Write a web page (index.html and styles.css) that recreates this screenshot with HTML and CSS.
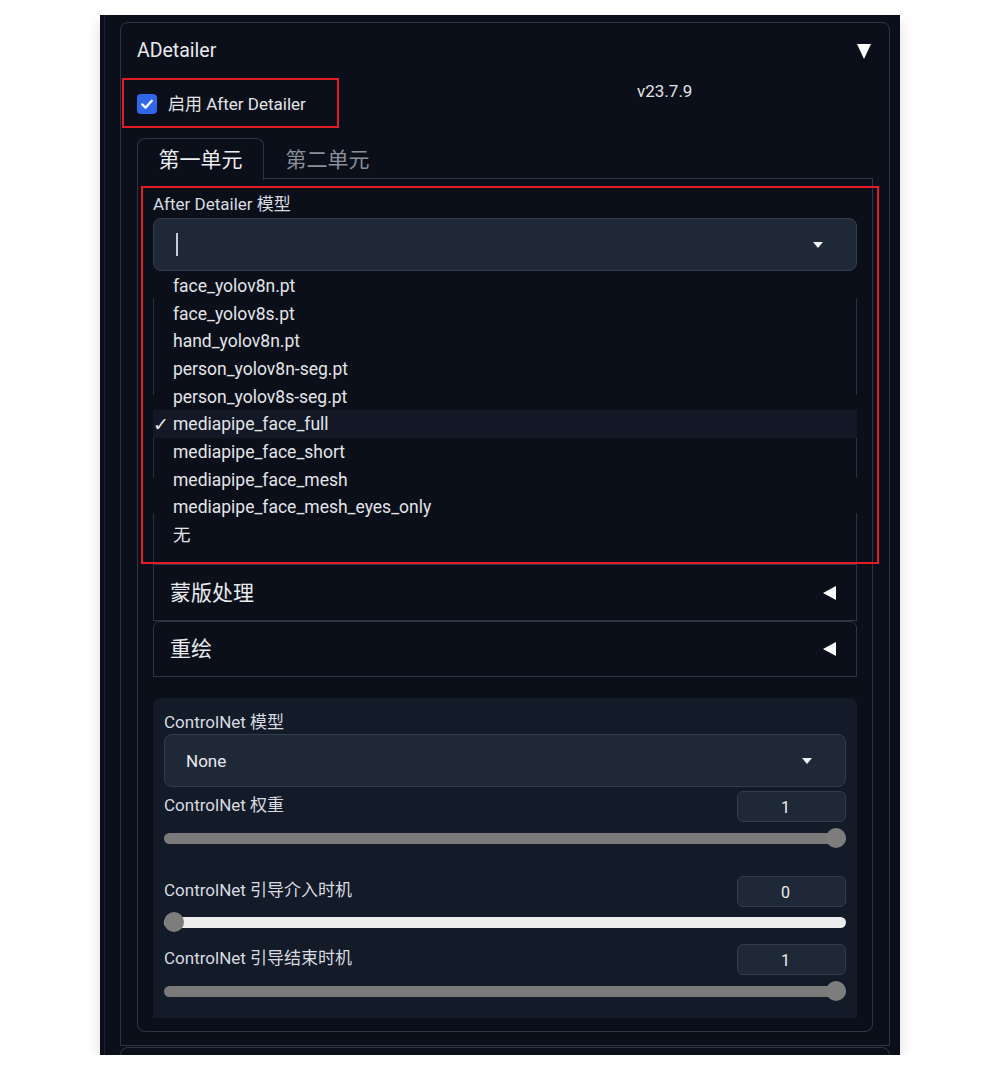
FILE: index.html
```html
<!DOCTYPE html>
<html lang="zh-CN">
<head>
<meta charset="utf-8">
<title>ADetailer</title>
<link rel="stylesheet" href="styles.css">
</head>
<body>
<div class="panel">
  <div class="col">
    <div class="acc">
      <div class="acc-head">
        <span class="acc-title">ADetailer</span>
        <span class="tri-down"></span>
      </div>
      <div class="opts">
        <label class="chk">
          <span class="chk-box"><svg width="20" height="20" viewBox="0 0 20 20"><path d="M5.2 10.4 L8.5 13.6 L14.8 6.8" fill="none" stroke="#fff" stroke-width="2.3" stroke-linecap="round" stroke-linejoin="round"/></svg></span>
          <span class="chk-text">启用 After Detailer</span>
        </label>
        <div class="ver">v23.7.9</div>
      </div>
      <div class="tabs">
        <div class="tab tab-on">第一单元</div>
        <div class="tab">第二单元</div>
      </div>
      <div class="tabpanel">
        <div class="field-label">After Detailer 模型</div>
        <div class="dd-wrap">
          <div class="dd"><span class="caret"></span><span class="dd-arrow"></span></div>
          <ul class="list">
            <li class="item">face_yolov8n.pt</li>
            <li class="item">face_yolov8s.pt</li>
            <li class="item">hand_yolov8n.pt</li>
            <li class="item">person_yolov8n-seg.pt</li>
            <li class="item">person_yolov8s-seg.pt</li>
            <li class="item item-sel"><span class="tick">✓</span>mediapipe_face_full</li>
            <li class="item">mediapipe_face_short</li>
            <li class="item">mediapipe_face_mesh</li>
            <li class="item">mediapipe_face_mesh_eyes_only</li>
            <li class="item">无</li>
          </ul>
        </div>
        <div class="ghost g1"></div>
        <div class="ghost g2"></div>
        <div class="ghost g3"></div>
        <div class="sub sub-a"><span class="sub-title">蒙版处理</span><span class="tri-left"></span></div>
        <div class="sub sub-b"><span class="sub-title">重绘</span><span class="tri-left"></span></div>
        <div class="cn">
          <div class="cn-label">ControlNet 模型</div>
          <div class="cn-dd"><span class="cn-val">None</span><span class="dd-arrow"></span></div>
          <div class="num-row r1"><span class="cn-label">ControlNet 权重</span><span class="num">1</span></div>
          <div class="slider s1"><span class="track track-full"></span><span class="thumb thumb-max"></span></div>
          <div class="num-row r2"><span class="cn-label">ControlNet 引导介入时机</span><span class="num">0</span></div>
          <div class="slider s2"><span class="track track-empty"></span><span class="thumb thumb-min"></span></div>
          <div class="num-row r3"><span class="cn-label">ControlNet 引导结束时机</span><span class="num">1</span></div>
          <div class="slider s3"><span class="track track-full"></span><span class="thumb thumb-max"></span></div>
        </div>
      </div>
    </div>
    <div class="acc acc-next"></div>
  </div>
  <div class="mark mark1"></div>
  <div class="mark mark2"></div>
</div>
</body>
</html>
```

FILE: styles.css
```css
* { box-sizing: border-box; margin: 0; padding: 0; }
html, body { background: #ffffff; }
body {
  font-family: Roboto, "Noto Sans CJK SC", sans-serif;
  color: #e5e7eb;
}

.panel {
  position: relative;
  width: 800px;
  height: 1040px;
  margin: 15px 0 0 100px;
  padding-left: 4px;
  background: #0b0f19;
  overflow: hidden;
  box-shadow: 0 6px 14px rgba(0, 0, 0, 0.13);
}
.col {
  height: 100%;
  border-left: 1px solid #1d2331;
  padding: 7px 10px 0 15px;
}

.acc {
  border: 1px solid #2e3645;
  border-radius: 8px 8px 0 0;
  padding: 0 16px 13px;
}
.acc-next {
  margin-top: 1px;
  height: 40px;
}

.acc-head {
  height: 54px;
  display: flex;
  align-items: center;
  justify-content: space-between;
  padding-right: 2px;
  padding-top: 2px;
}
.acc-title {
  font-size: 19.5px;
  line-height: 28px;
  color: #e8eaee;
}
.tri-down {
  width: 0;
  height: 0;
  border-left: 7px solid transparent;
  border-right: 7px solid transparent;
  border-top: 15px solid #ffffff;
}

.opts {
  height: 61px;
  display: grid;
  grid-template-columns: 500px 1fr;
}
.chk {
  display: flex;
  align-items: center;
  gap: 11px;
  height: 20px;
  margin-top: 17px;
}
.chk-box {
  width: 20px;
  height: 20px;
  border-radius: 4px;
  background: #2f67e8;
  display: block;
}
.chk-box svg { display: block; }
.chk-text {
  font-size: 17px;
  line-height: 20px;
  color: #e2e4e8;
}
.ver {
  margin-top: 4px;
  font-size: 17px;
  line-height: 20px;
  color: #e2e4e8;
}

.tabs {
  display: flex;
  height: 41px;
  border-bottom: 1px solid #2e3645;
}
.tab {
  height: 41px;
  padding: 0 20.5px;
  border: 1px solid transparent;
  border-bottom: none;
  font-size: 21px;
  line-height: 42px;
  color: #8a8f99;
  white-space: nowrap;
}
.tab-on {
  border-color: #2e3645;
  border-radius: 8px 8px 0 0;
  background: #0b0f19;
  color: #eceef1;
  margin-bottom: -1px;
  height: 42px;
}

.tabpanel {
  border: 1px solid #2e3645;
  border-top: none;
  border-radius: 0 0 8px 8px;
  padding: 15px 15px 13px;
}
.field-label {
  font-size: 17px;
  line-height: 20px;
  color: #d8dbe0;
}
.dd-wrap {
  position: relative;
  margin-top: 4px;
}
.dd {
  height: 53px;
  background: #1f2837;
  border: 1px solid #343d4c;
  border-radius: 8px;
  display: flex;
  align-items: center;
  justify-content: space-between;
  padding: 0 33px 0 22px;
}
.caret {
  width: 1.5px;
  height: 23px;
  background: #c9ccd2;
}
.dd-arrow {
  width: 0;
  height: 0;
  border-left: 5.5px solid transparent;
  border-right: 5.5px solid transparent;
  border-top: 6px solid #eef0f3;
}

.list {
  position: absolute;
  top: 54px;
  left: 1px;
  right: 1px;
  z-index: 2;
  list-style: none;
  background: #0b0f19;
}
.item {
  position: relative;
  height: 27.67px;
  line-height: 29px;
  padding-left: 19px;
  font-size: 17.5px;
  color: #e3e5e9;
  white-space: nowrap;
}
.item-sel {
  background: #121826;
  margin: 0 -1px;
  padding-left: 20px;
}
.tick {
  position: absolute;
  left: 0;
  top: 0;
  font-family: "DejaVu Sans", sans-serif;
  font-size: 19px;
}

.ghost {
  border-left: 1px solid #2a3240;
  border-right: 1px solid #2a3240;
}
.g1 { margin-top: 27px; height: 97px; }
.g2 { margin-top: 15px; height: 68px; }
.g3 { margin-top: 35px; height: 51px; }

.sub {
  border: 1px solid #2e3645;
  display: flex;
  align-items: center;
  justify-content: space-between;
  padding: 0 20px 0 16px;
}
.sub-a { height: 57px; }
.sub-b {
  height: 56px;
  border-top: 1px solid #2e3645;
  border-radius: 7px 7px 0 0;
}
.sub-title {
  font-size: 21px;
  line-height: 28px;
  color: #e8eaee;
}
.tri-left {
  width: 0;
  height: 0;
  border-top: 7px solid transparent;
  border-bottom: 7px solid transparent;
  border-right: 13px solid #ffffff;
}

.cn {
  margin-top: 21px;
  height: 320px;
  background: #131a28;
  border-radius: 8px 8px 0 0;
  padding: 14px 11px 0;
}
.cn-label {
  font-size: 17px;
  line-height: 20px;
  color: #d8dbe0;
}
.cn-dd {
  margin-top: 2px;
  height: 53px;
  background: #1f2837;
  border: 1px solid #343d4c;
  border-radius: 8px;
  display: flex;
  align-items: center;
  justify-content: space-between;
  padding: 0 33px 0 21px;
}
.cn-val {
  font-size: 17px;
  color: #e8eaee;
}
.num-row {
  height: 31px;
  display: flex;
  align-items: center;
  justify-content: space-between;
}
.num-row .cn-label { margin-top: -3px; }
.r1 { margin-top: 4px; }
.r2 { margin-top: 28px; }
.r3 { margin-top: 12px; }
.num {
  width: 109px;
  height: 31px;
  background: #1f2837;
  border: 1px solid #343d4c;
  border-radius: 6px;
  text-align: center;
  padding-right: 12px;
  font-size: 16px;
  line-height: 31px;
  color: #eceef1;
}

.slider {
  position: relative;
  height: 20px;
}
.s1 { margin-top: 6px; }
.s2 { margin-top: 5px; }
.s3 { margin-top: 6px; }
.track {
  position: absolute;
  left: 0;
  right: 0;
  top: 4.5px;
  height: 11px;
  border-radius: 6px;
}
.track-full { background: #7a7a7a; }
.track-empty { background: #ededed; }
.thumb {
  position: absolute;
  top: 0;
  width: 20px;
  height: 20px;
  border-radius: 50%;
  background: #7d7d7d;
}
.thumb-max { right: 0; }
.thumb-min { left: 0; }

.mark {
  position: absolute;
  border: 2px solid #e31c25;
  z-index: 5;
}
.mark1 { left: 22px; top: 63px; width: 217px; height: 50px; }
.mark2 { left: 41px; top: 171px; width: 738px; height: 378px; }
```
